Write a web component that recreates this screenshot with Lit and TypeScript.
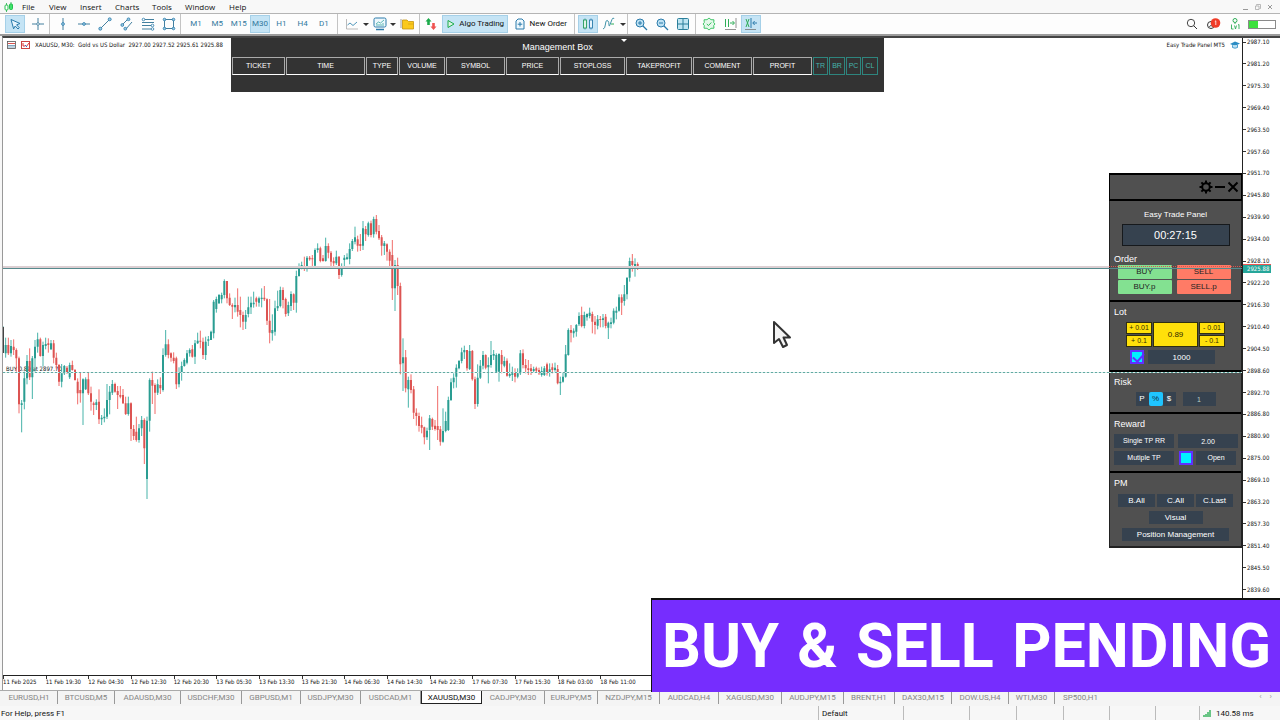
import { LitElement, html, svg, css } from "lit";
import { customElement } from "lit/decorators.js";

/* Candles: wick top, body top, body bottom, wick bottom in thirds of a pixel
   below the session's base; the sign of the last number gives the direction. */
const SESSIONS: { base: number; rows: string }[] = [
  {
    base: 870,
    rows: `110 110 188 188;143 165 190 203;143 165 190 -195;150 168 190 200;148 170 180 -195;175 180 205 -245;200 205 343 -370;330 340 345 427;245 265 335 358;195 213 265 283;175 213 262 -270;198 205 262 327;150 170 205 245;128 148 170 188;143 148 198 -200;155 165 198 230;143 162 168 178;145 160 165 -188;150 160 178 180;150 160 203 -220;188 203 225 -238;222 225 275 -288;222 250 275 292;225 228 250 255;228 233 250 -250;218 225 262 267;212 225 240 -242;237 240 270 -272;265 275 310 -343;247 300 310 -338;265 268 310 405;262 268 298 300;248 268 310 -315;290 310 335 -362;335 340 345 -375;328 337 345 360;298 335 388 -402;375 383 388 405;355 380 385 397;282 330 380 387;288 305 330 373;270 282 308 315;278 282 305 -308;288 303 315 -357;288 315 320 -325;297 315 340 -342;320 340 372 -375;320 340 372 377;337 340 417 -453;405 417 438 -450;380 425 450 -455;402 415 450 458;378 390 415 438;385 390 475 -522;380 392 567 627;265 270 392 425;245 270 287 -342;280 285 308 -372;268 283 308 315;262 285 295 -312;175 195 300 305;120 163 195 200;148 163 195 -205;187 190 203 -215;187 203 213 -220;200 205 283 -297;232 248 283 292;215 228 248 272;205 210 228 230;180 190 218 223;175 180 190 200;165 178 200 -203;150 160 200 222;128 152 160 162;122 152 155 -175;143 155 195 -207;140 155 195 210;138 148 152 168;122 125 150 150;30 35 130 145;20 27 57 68;12 15 40 42`,
  },
  {
    base: 600,
    rows: `278 285 298 310;238 243 285 295;243 243 295 -310;280 293 315 -318;310 315 320 -357;293 315 322 337;265 315 335 -350;290 330 345 -382;335 345 365 -390;330 345 365 387;290 322 342 352;290 308 322 342;275 308 313 323;290 295 305 -320;290 295 308 320;265 293 297 322;258 293 298 -303;295 298 362 -375;297 362 398 -430;343 390 400 422;302 325 395 407;272 318 325 333;260 270 318 322;262 270 300 -325;293 297 342 -350;305 315 340 348;274 282 318 333;280 283 308 -330;212 228 308 338;190 203 228 230;185 195 203 208;170 200 207 -213;168 173 205 215;168 173 178 -182;165 175 178 -200;145 150 197 198;130 145 150 158;140 145 183 -187;165 175 183 -185;113 138 183 185;130 138 158 -175;153 158 185 -203;172 183 190 -202;152 170 190 195;168 170 225 -237;190 203 225 230;165 173 180 205;160 172 177 180;130 147 177 193;117 123 147 153;80 112 125 133;107 118 137 -155;102 132 138 -153;63 85 137 150;78 87 103 -123;65 70 105 110;62 70 105 -112;50 57 103 113;45 57 95 -103;75 93 115 -120;105 112 137 -167;123 130 138 165;130 133 155 -182;148 155 182 -200;120 165 265 -300;180 195 265 333;173 195 258 -285;248 258 493 -523;415 472 490 573;450 472 565 -577;530 540 568 623;523 540 570 -580;558 568 638 -657;625 638 648 -677;638 648 678 -695;650 675 683 -700;680 682 712 -733;683 692 712 720`,
  },
  {
    base: 720,
    rows: `525 535 570 630;533 537 560 -570;540 557 567 -572;438 558 570 -600;558 568 605 -617;505 573 605 608;515 543 573 577;470 480 570 573;415 427 480 483;400 413 427 445;373 383 410 443;360 363 385 388;323 337 363 370;317 330 337 357;330 330 385 -392;315 333 387 390;330 333 418 -422;410 418 492 -507;373 413 492 500;360 377 413 417;333 345 377 388;343 345 383 -388;352 375 382 430;303 345 375 383;330 342 347 360;340 345 395 398;340 342 395 425;330 345 373 -400;350 363 377 382;355 362 407 -410;370 402 408 413;380 400 405 423;385 397 410 -427;385 400 410 415;330 340 400 405;328 340 375 -385;357 375 385 -400;360 385 390 -405;372 385 393 -405;380 387 393 397;380 385 392 -397;383 390 400 -405;380 393 405 410;378 385 405 408;368 373 400 -407;370 388 397 410;370 382 390 -400;368 383 390 395;375 387 430 -433;410 425 430 465;397 410 425 428;315 343 410 413;265 270 345 347;255 270 278 -307;265 272 280 293;252 255 275 290;217 228 253 258;200 225 258 -262;215 225 258 265;220 222 232 242;203 218 228 235;215 222 245 -280;228 245 255 -283;225 238 257 268;228 237 240 -262;222 235 240 262;222 230 258 -265;245 248 263 297;233 247 252 265;205 212 248 253;200 212 218 238;163 172 212 215;163 172 188 -225;135 163 183 197;112 113 163 178;53 63 113 125;42 63 75 -95;55 72 82 110;67 72 85 -90`,
  },
];

function candlePaths() {
  const out = { upWick: "", upBody: "", downWick: "", downBody: "" };
  let i = 0;
  for (const session of SESSIONS) {
    for (const row of session.rows.split(";")) {
      const [top, open, close, low] = row.split(" ").map(Number);
      const y = (v: number) => (v + session.base) / 3 - 38;
      const x = (9 + 8 * i) / 3 - 3;
      const wick = `M${x.toFixed(2)} ${y(top).toFixed(2)}V${y(Math.abs(low)).toFixed(2)}`;
      const body = `M${x.toFixed(2)} ${y(open).toFixed(2)}V${y(Math.max(close, open + 2)).toFixed(2)}`;
      if (low < 0) {
        out.downWick += wick;
        out.downBody += body;
      } else {
        out.upWick += wick;
        out.upBody += body;
      }
      i++;
    }
  }
  return out;
}

const MENUS = ["File", "View", "Insert", "Charts", "Tools", "Window", "Help"];
const FRAMES = ["M1", "M5", "M15", "M30", "H1", "H4", "D1"];
const TIMES = ["11 Feb 2025", "11 Feb 19:30", "12 Feb 04:30", "12 Feb 12:30", "12 Feb 20:30", "13 Feb 05:30", "13 Feb 13:30", "13 Feb 21:30", "14 Feb 06:30", "14 Feb 14:30", "14 Feb 22:30", "17 Feb 07:30", "17 Feb 15:30", "18 Feb 03:00", "18 Feb 11:00"];
const PRICES = Array.from({ length: 26 }, (_, i) => (2987.1 - i * 5.9).toFixed(2));
const TABS = ["EURUSD,H1", "BTCUSD,M5", "ADAUSD,M30", "USDCHF,M30", "GBPUSD,M1", "USDJPY,M30", "USDCAD,M1", "XAUUSD,M30", "CADJPY,M30", "EURJPY,M5", "NZDJPY,M15", "AUDCAD,H4", "XAGUSD,M30", "AUDJPY,M15", "BRENT,H1", "DAX30,M15", "DOW.US,H4", "WTI,M30", "SP500,H1"];
const COLUMNS: [string, number][] = [["TICKET", 53], ["TIME", 79], ["TYPE", 32], ["VOLUME", 46], ["SYMBOL", 59], ["PRICE", 53], ["STOPLOSS", 65], ["TAKEPROFIT", 66], ["COMMENT", 59], ["PROFIT", 59], ["TR", 15], ["BR", 16], ["PC", 15], ["CL", 16]];

const icon = (body: unknown, w = 14, h = 14) =>
  html`<svg class="icon" width=${w} height=${h} viewBox="0 0 ${w} ${h}" aria-hidden="true">${body}</svg>`;

const ICONS = {
  pointer: svg`<path d="M3 2.5 12 6.5 8.6 7.8 11.3 10.8 10 12 7.2 9 5.6 11.8Z" fill="#e8f5fd" stroke="#2b7bab"/>`,
  cross: svg`<path d="M7 1V13M1 7H13" stroke="#44809f"/><circle cx="7" cy="7" r="1.3" fill="#fff" stroke="#44809f" stroke-width=".8"/>`,
  vline: svg`<path d="M7 1V13" stroke="#44809f"/><circle cx="7" cy="7" r="1.4" fill="#9ccbe4" stroke="#2b7bab" stroke-width=".8"/>`,
  hline: svg`<path d="M1 7H13" stroke="#44809f"/><circle cx="7" cy="7" r="1.4" fill="#9ccbe4" stroke="#2b7bab" stroke-width=".8"/>`,
  trend: svg`<path d="M2 12 12 2" stroke="#44809f"/><circle cx="2.3" cy="11.7" r="1.5" fill="#9ccbe4" stroke="#2b7bab" stroke-width=".8"/><circle cx="11.7" cy="2.3" r="1.5" fill="#9ccbe4" stroke="#2b7bab" stroke-width=".8"/>`,
  channel: svg`<path d="M2 8 8 2M6 12 12 5" stroke="#44809f"/><circle cx="2.3" cy="8" r="1.4" fill="#9ccbe4" stroke="#2b7bab" stroke-width=".8"/><circle cx="8.5" cy="2.3" r="1.4" fill="#9ccbe4" stroke="#2b7bab" stroke-width=".8"/><circle cx="5.3" cy="11.7" r="1.4" fill="#9ccbe4" stroke="#2b7bab" stroke-width=".8"/>`,
  fibo: svg`<path d="M1 2.5H13M1 5.5H13M1 8.5H13M1 12H10" stroke="#44809f"/><circle cx="2.5" cy="2.5" r="1.3" fill="#fff" stroke="#2b7bab" stroke-width=".8"/><circle cx="11.5" cy="8.5" r="1.3" fill="#fff" stroke="#2b7bab" stroke-width=".8"/><circle cx="11.5" cy="12" r="1.3" fill="#fff" stroke="#2b7bab" stroke-width=".8"/>`,
  shape: svg`<path d="M2.5 2.5H11.5V11.5H2.5Z" fill="none" stroke="#44809f"/><g fill="#9ccbe4" stroke="#2b7bab" stroke-width=".8"><circle cx="2.5" cy="2.5" r="1.3"/><circle cx="11.5" cy="2.5" r="1.3"/><circle cx="2.5" cy="11.5" r="1.3"/><circle cx="11.5" cy="11.5" r="1.3"/></g>`,
  line: svg`<path d="M1.5 2V12H13" fill="none" stroke="#aaa" stroke-width=".8"/><path d="M2.500 8 5 6 8 8.500 12 5" fill="none" stroke="#4f97bb"/>`,
  template: svg`<rect x="1" y="1" width="12" height="9" rx="1.5" fill="#eef8fd" stroke="#2b7bab"/><path d="M3 7 5.5 5 7.5 6 11 3M4 9V7M6 9V7M8 9V7M10 9V6" fill="none" stroke="#39a6a0" stroke-width=".8"/><path d="M3 12.5H11" stroke="#2b7bab" stroke-width="1.5"/>`,
  folder: svg`<path d="M1 2V11" stroke="#888" stroke-width=".8"/><path d="M2.5 3H7L8.500 4.500H13.500V12H2.500Z" fill="#fbc91c" stroke="#c79610" stroke-width=".8"/><path d="M8 7H13.500" stroke="#d9a414" stroke-width=".8"/>`,
  updown: svg`<path d="M4.500 1 7.500 4.500H5.800V8H3.200V4.500H1.500Z" fill="#1cab4b"/><path d="M9.500 13 12.500 9.500H10.800V6H8.200V9.500H6.500Z" fill="#ef5350"/>`,
  play: svg`<path d="M2 1.500 8 5 2 8.500Z" fill="#dcf5e4" stroke="#1cab4b"/>`,
  order: svg`<path d="M3 1H7L9 3V11H1V3Z" fill="#eef8fd" stroke="#2b7bab"/><path d="M5 4V8.500M2.700 6.200H7.300" stroke="#2b7bab"/>`,
  candles: svg`<path d="M4 1.500V12.500M10 1.500V12.500" stroke="#2b7bab" stroke-width=".8"/><rect x="2.500" y="3" width="3" height="8" fill="#dff3e8" stroke="#259b5d" stroke-width=".9"/><rect x="8.500" y="3" width="3" height="8" fill="#e8f5fd" stroke="#2b7bab" stroke-width=".9"/>`,
  indicator: svg`<path d="M1 12Q3 12 3.500 7T6 4Q7 5 7 8T9 5T12 2" fill="none" stroke="#4093a8"/><path d="M9 7H12" stroke="#2fae58"/>`,
  zoomIn: svg`<circle cx="6" cy="6" r="4" fill="#bde1f3" stroke="#2b7bab"/><path d="M9 9 13 13" stroke="#2b7bab" stroke-width="1.300"/><path d="M4 6H8M6 4V8" stroke="#2b7bab"/>`,
  zoomOut: svg`<circle cx="6" cy="6" r="4" fill="#bde1f3" stroke="#2b7bab"/><path d="M9 9 13 13" stroke="#2b7bab" stroke-width="1.300"/><path d="M4 6H8" stroke="#2b7bab"/>`,
  grid: svg`<rect x="1.500" y="1.500" width="11" height="11" rx="1" fill="#bfe5f2" stroke="#2b7f9b"/><path d="M7 1.500V12.500M1.500 7H12.500" stroke="#2b7f9b"/>`,
  gear: svg`<path d="M7 1 9 2.700 12 2.800 11.700 5.500 13 7 11.700 8.500 12 11.200 9 11.300 7 13 5 11.300 2 11.200 2.300 8.500 1 7 2.300 5.500 2 2.800 5 2.700Z" fill="#e4f8ea" stroke="#2fbf5a" stroke-width=".9"/><path d="M4.800 7 6.500 8.500 9.300 5.500" fill="none" stroke="#2fbf5a"/>`,
  scroll: svg`<path d="M2.500 2V10M5.500 2V10M7 6H11M9.500 4 11.500 6 9.500 8" fill="none" stroke="#2fae58"/><path d="M13 1V11M2 12.500H13" stroke="#777" stroke-width=".8"/>`,
  shift: svg`<path d="M2 2 5 10M5 2 2 10" stroke="#2fae58"/><path d="M7 1V11M9 6H13M10.700 4 8.700 6 10.700 8" fill="none" stroke="#2b7bab"/><path d="M1 12.500H12" stroke="#777" stroke-width=".8"/>`,
  search: svg`<circle cx="6" cy="6" r="3.700" fill="none" stroke="#333" stroke-width=".9"/><path d="M8.700 8.700 12 12" stroke="#333"/>`,
};

@customElement("app-root")
export class AppRoot extends LitElement {
  static styles = css`
    :host { display: flex; flex-direction: column; min-height: 100vh; position: relative; overflow: hidden; background: #f7f7f7; color: #111; font: 8px/12px Roboto, "Open Sans", sans-serif; }
    * { box-sizing: border-box; }
    button, input { font: inherit; color: inherit; margin: 0; padding: 0; border: 0; border-radius: 0; background: none; white-space: nowrap; }
    .icon { display: block; flex: none; }

    .menubar { display: flex; align-items: center; height: 13px; padding: 0 6px 0 4px; background: #f8f8f8; font-family: "Open Sans", "Noto Sans", sans-serif; }
    .menubar nav { display: grid; grid-template-columns: 27px 31px 35px 37px 33px 44px 24px; margin-left: 8px; }
    .menubar button { text-align: left; }
    .window-buttons { display: flex; gap: 4px; margin-left: auto; }

    .toolbar { display: grid; grid-template-columns: 49px 131px 157px 82px 155px 53px 68px 68px 1fr; height: 23px; background: #fdfdfd; border-top: 1px solid #b4b4b4; border-bottom: 2px solid #9c9c9c; }
    .group { display: flex; align-items: center; justify-content: space-between; padding: 0 1px 0 3px; border-left: 1px solid #c4c4c4; }
    .group.first { border-left: 0; padding-left: 5px; }
    .group.frames { padding: 0 3px 0 5px; }
    .group.tools { padding: 0 4px 0 6px; }
    .group.trade { padding: 0 3px; }
    .group.zooms, .group.scrolls { padding-right: 2px; }
    .group.right { border: 0; justify-content: flex-end; gap: 7px; padding-right: 4px; }
    .tool { display: flex; align-items: center; justify-content: center; width: 20px; height: 18px; color: #33799d; }
    .tool.narrow { width: 16px; }
    .tool.wide { width: auto; gap: 4px; padding: 0 4px; color: #111; }
    .on { background: #c5e4f5; outline: 1px solid #a5d0e8; outline-offset: -1px; }
    .caret { width: 0; border: 3px solid transparent; border-top-color: #333; border-bottom: 0; }
    .battery { display: block; width: 28px; height: 9px; border: 1px solid #8a8a8a; background: linear-gradient(90deg, #3de03d 9px, #fff 9px); }

    .frame { flex: 1; display: grid; grid-template: 1fr 15px / 1fr 37px; margin-left: 2px; border-top: 2px solid #444; border-left: 1px solid #999; background: #fff; position: relative; font-family: "DejaVu Sans Condensed", "DejaVu Sans", sans-serif; font-size: 6px; line-height: 8px; }
    .plot { position: relative; border-right: 1px solid #222; border-bottom: 1px solid #222; }
    .chart { display: block; position: absolute; left: 0; top: 0; }
    .chart-head { position: relative; display: flex; align-items: center; justify-content: space-between; padding: 3px 2px 0 4px; height: 11px; }
    .chart-head div { display: flex; align-items: center; gap: 5px; white-space: pre; }
    .prices { display: flex; flex-direction: column; justify-content: space-between; padding-bottom: 82px; position: relative; }
    .prices span { display: flex; align-items: center; gap: 1px; height: 8px; }
    .prices span::before { content: ""; width: 3px; height: 1px; background: #333; }
    .tag { position: absolute; left: 0; top: 226px; padding: 0 2px 0 4px; background: #26a69a; color: #fff; border-top: 1px solid #ef5350; font-weight: 400; line-height: 8px; }
    .times { grid-column: 1 / 3; display: grid; grid-template-columns: repeat(15, 1fr); width: 640px; }
    .times span { padding-top: 2px; height: 13px; white-space: nowrap; background: linear-gradient(#333, #333) 0 0 / 1px 3px no-repeat; }

    .position { position: absolute; left: 3px; top: 327px; }
    .level { position: absolute; left: 0; right: 0; z-index: 3; height: 0; pointer-events: none; }
    .level.ask { top: 228px; right: 133px; border-top: 2px solid #dccfd2; }
    .level.ask-dots { top: 228px; left: auto; width: 133px; border-top: 1px dotted #d9534f; }
    .level.bid { top: 230px; border-top: 1px solid #568a8d; }
    .level.entry { top: 334px; height: 1px; background: repeating-linear-gradient(90deg, #62aaa2 0 2px, #d5ebe9 2px 4px); }

    .box { position: absolute; left: 228px; top: 0; width: 653px; height: 54px; background: #333; color: #fff; font-family: "Liberation Sans", Arial, sans-serif; text-align: center; }
    .box h2 { margin: 0; padding-top: 3px; height: 19px; font-size: 9px; line-height: 12px; font-weight: 400; }
    .box table { border-spacing: 1px 0; table-layout: fixed; width: 648px; font-size: 7px; line-height: 8px; }
    .box th { height: 18px; padding: 0; font-weight: 400; border: 1px solid #aaa; border-bottom-color: #fff; }
    .box th.action { color: #45b5ab; border-color: #2e857e; }
    .marker { position: absolute; left: 390px; top: 1px; border: 3px solid transparent; border-top-color: #fff; border-bottom: 0; }

    .panel { position: absolute; right: 0; top: 135px; width: 133px; border: 1px solid #222; border-width: 0 1px 2px; background: #505050; color: #fff; font: 8px/10px "Liberation Sans", Arial, sans-serif; }
    .panel header { display: flex; justify-content: flex-end; align-items: center; gap: 1px; height: 28px; padding-right: 2px; border: 2px solid #000; border-width: 2px 1px; margin: 0 -1px; }
    .panel h2, .panel h3 { margin: 0; font-size: 8px; line-height: 10px; font-weight: 400; }
    .panel h3 { font-size: 9px; padding-left: 4px; }
    .panel section { border-bottom: 2px solid #000; padding-top: 5px; }
    .panel .title { text-align: center; padding-top: 4px; }
    .panel .clock { display: block; margin: 4px auto 8px; width: 108px; height: 22px; border: 1px solid #16191c; background: #36424f; font-size: 11px; line-height: 20px; text-align: center; }
    .orders { display: grid; grid-template-columns: 54px 54px; gap: 1px 5px; justify-content: center; padding: 1px 3px 0 0; color: #222; }
    .orders button { height: 14px; border-radius: 1px; background: #83e191; }
    .orders .sell { background: #ff7b66; }
    .panel .order { height: 101px; }
    .panel .lot { height: 70px; }
    .panel .risk { height: 42px; }
    .panel .reward { height: 59px; }
    .lots { display: grid; grid-template: 12px 12px / 26px 45px 26px; grid-auto-flow: column; gap: 1px; justify-content: center; padding: 5px 0 0; color: #332b00; }
    .lots > * { background: #ffe00a; font-size: 7px; line-height: 10px; text-align: center; width: 100%; height: 100%; border: 1px solid #302f10; }
    .lots input { grid-row: span 2; font-size: 8px; }
    .row { display: flex; justify-content: center; gap: 4px; padding-top: 3px; }
    .row > button, .row > .field { height: 14px; background: #36424f; text-align: center; }
    .row.tight { gap: 0; }
    .field { width: 67px; }
    .check { appearance: none; width: 14px; height: 14px; border: 2px solid #6030ff; background: #00f0ff; position: relative; }
    .check.tick:checked::after { content: ""; position: absolute; left: 3px; top: -1px; width: 5px; height: 9px; border: solid #6030ff; border-width: 0 2px 2px 0; transform: rotate(42deg); }
    .lot .row { padding-right: 6px; }
    .risk .row { padding: 5px 0 0; }
    .risk .row > button { width: 13px; }
    .risk .row > .current { width: 14px; background: #1fc4ff; color: #103040; border-radius: 2px; }
    .risk .field { width: 33px; margin-left: 7px; color: #b9d2c6; font-size: 7px; }
    .reward .row { font-size: 7px; justify-content: flex-start; padding: 3px 0 0 4px; }
    .reward h3 + .row { padding-top: 5px; }
    .reward .row > button, .reward .field { width: 60px; }
    .reward .row > .check { margin-left: 1px; }
    .reward .row > .open { width: 40px; margin-left: -1px; }
    .panel .pm { border: 0; height: 73px; }
    .pm .row { padding-top: 4px; }
    .pm h3 + .row { padding-top: 6px; }
    .pm .row > button { width: 37px; height: 13px; }
    .pm .row:nth-of-type(1) { gap: 2px; }
    .pm .row > .visual { width: 54px; }
    .pm .row > .manage { width: 107px; }

    .tabs { display: grid; grid-template-columns: 57px 57px 66px 61px 59px 60px 60px 61px 63px 53px 62px 59px 63px 62px 51px 57px 57px 46px 51px 1fr; height: 16px; padding: 0 8px 2px 1px; margin-top: -1px; background: #f4f4f4; border-top: 1px solid #aaa; position: relative; }
    .tabs button { height: 13px; line-height: 11px; color: #858585; border-right: 1px solid #999; }
    .tabs button.last { border: 0; }
    .tabs button.active { background: #fff; color: #111; border: 1px solid #222; border-top: 0; }
    .arrows { text-align: right; color: #999; white-space: pre; }
    .status { display: grid; grid-template-columns: 818px 85px 66px 47px 47px 46px 46px 44px 1fr; height: 14px; line-height: 13px; background: #f7f7f7; white-space: nowrap; }
    .status span { padding-left: 3px; border-left: 1px solid #bbb; display: flex; align-items: center; gap: 5px; }
    .status span.help { border: 0; padding-left: 1px; }

    .banner { position: absolute; right: 0; bottom: 28px; z-index: 5; display: flex; align-items: center; justify-content: space-between; width: 629px; height: 94px; margin: 0; padding: 0 9px 0 10px; border: 2px solid #111; border-width: 2px 0 0 1px; background: #762dfe; color: #fff; font: 700 61px/92px Roboto, "Open Sans", sans-serif; }
    .mouse { position: absolute; left: 772px; top: 320px; z-index: 6; }
  `;

  private tool(body: unknown, label: string, on = false) {
    return html`<button class="tool ${on ? "on" : ""}" aria-label=${label}>${icon(body)}</button>`;
  }

  render() {
    const c = candlePaths();
    return html`
      <div class="menubar">
        ${icon(svg`<path d="M2.500 1V10M7 0V8" stroke="#25a84d" stroke-width=".8"/><rect x="1" y="3" width="3" height="5" rx="1" fill="#fff" stroke="#25c04d"/><rect x="5.500" y="2" width="3" height="5.500" rx="1" fill="#3fe36b" stroke="#25c04d"/>`, 10, 10)}
        <nav>${MENUS.map((m) => html`<button>${m}</button>`)}</nav>
        <div class="window-buttons">
          ${icon(svg`<path d="M1 6.500H6" stroke="#999"/>`, 8, 8)}
          ${icon(svg`<path d="M2.500 2.500V1.500H6.500V5.500H5.500M1.500 3H5V6.500H1.500Z" fill="none" stroke="#aaa" stroke-width=".8"/>`, 8, 8)}
          ${icon(svg`<path d="M2 2 6 6M6 2 2 6" stroke="#999"/>`, 8, 8)}
        </div>
      </div>

      <div class="toolbar">
        <div class="group first">${this.tool(ICONS.pointer, "Cursor", true)}${this.tool(ICONS.cross, "Crosshair")}</div>
        <div class="group">
          ${this.tool(ICONS.vline, "Vertical line")}${this.tool(ICONS.hline, "Horizontal line")}${this.tool(ICONS.trend, "Trend line")}${this.tool(ICONS.channel, "Channel")}${this.tool(ICONS.fibo, "Fibonacci")}${this.tool(ICONS.shape, "Shapes")}
        </div>
        <div class="group frames">${FRAMES.map((f) => html`<button class="tool ${f === "M30" ? "on" : ""}">${f}</button>`)}</div>
        <div class="group tools">
          <button class="tool narrow" aria-label="Chart type">${icon(ICONS.line)}</button><i class="caret"></i>
          <button class="tool narrow" aria-label="Templates">${icon(ICONS.template)}</button><i class="caret"></i>
          <button class="tool narrow" aria-label="Profiles">${icon(ICONS.folder)}</button>
        </div>
        <div class="group trade">
          <button class="tool narrow" aria-label="Trades">${icon(ICONS.updown)}</button>
          <button class="tool wide on">${icon(ICONS.play, 9, 10)}Algo Trading</button>
          <button class="tool wide">${icon(ICONS.order, 10, 12)}New Order</button>
        </div>
        <div class="group">
          ${this.tool(ICONS.candles, "Candles", true)}<button class="tool narrow" aria-label="Indicators">${icon(ICONS.indicator)}</button><i class="caret"></i>
        </div>
        <div class="group zooms">${this.tool(ICONS.zoomIn, "Zoom in")}${this.tool(ICONS.zoomOut, "Zoom out")}${this.tool(ICONS.grid, "Tile windows")}</div>
        <div class="group scrolls">${this.tool(ICONS.gear, "Settings")}${this.tool(ICONS.scroll, "Auto scroll")}${this.tool(ICONS.shift, "Chart shift", true)}</div>
        <div class="group right">
          ${icon(ICONS.search)}
          ${icon(svg`<circle cx="5" cy="8" r="3.500" fill="none" stroke="#333"/><path d="M3.500 10C4 8 6 8 6.500 10" stroke="#333" fill="none"/><circle cx="9.500" cy="6" r="4.800" fill="#f03c28"/><path d="M8.800 4.600 9.800 3.800V8" fill="none" stroke="#fff" stroke-width=".8"/>`, 16, 14)}
          ${icon(svg`<circle cx="6" cy="3.500" r="2" fill="none" stroke="#2fae58"/><path d="M6 5.500V7M2.500 7.500V12H4.500M5.500 8.500 6.500 12 7.500 8.500M9 8 10 7.500V12" fill="none" stroke="#2fae58" stroke-width=".9"/>`, 12, 14)}
          <i class="battery"></i>
        </div>
      </div>

      <main class="frame">
        <div class="plot">
          <span class="position">BUY 0.89 at 2897.70</span>
          <svg class="chart" width="640" height="500" fill="none" aria-label="XAUUSD M30 candles">
            <path d=${c.upWick} stroke="#26a69a" stroke-opacity=".85"/>
            <path d=${c.downWick} stroke="#ef5350" stroke-opacity=".85"/>
            <path d=${c.upBody} stroke="#2a9d92" stroke-width="2"/>
            <path d=${c.downBody} stroke="#dc5452" stroke-width="2"/>
            <path d="M.5 289V315" stroke="#444"/>
          </svg>
          <div class="chart-head">
            <div>
              ${icon(svg`<rect x=".500" y=".500" width="8" height="7" fill="#fff" stroke="#555" stroke-width=".8"/><path d="M1 2.500H8" stroke="#d9534f"/><path d="M1 4.500H8M1 6H8" stroke="#4a7fa5" stroke-width=".7"/>`, 9, 8)}
              ${icon(svg`<rect x=".500" y=".500" width="8" height="7" fill="#fff" stroke="#c44"/><path d="M2 2V5H4M5 6 8 2" fill="none" stroke="#d33"/><path d="M4 4 6 6" stroke="#36c"/>`, 9, 8)}
              <span>XAUUSD, M30:  Gold vs US Dollar  2927.00 2927.52 2925.61 2925.88</span>
            </div>
            <div>
              <span>Easy Trade Panel MT5</span>
              ${icon(svg`<path d="M0 3 5 .500 10 2.500 5 5Z" fill="#2b8cc4"/><path d="M2.500 4.200V6.500Q5 8 7.500 6.500V4" fill="#bde1f3" stroke="#2b8cc4" stroke-width=".8"/>`, 10, 8)}
            </div>
          </div>

          <div class="box">
            <h2>Management Box</h2>
            <table>
              <thead><tr>${COLUMNS.map(([name, w]) => html`<th scope="col" class=${name.length === 2 ? "action" : ""} style="width:${w}px">${name}</th>`)}</tr></thead>
            </table>
            <i class="marker"></i>
          </div>

          <aside class="panel">
            <header>
              <button aria-label="Settings">${icon(svg`<circle cx="7" cy="7" r="3.800" fill="none" stroke="#000" stroke-width="2"/><path d="M7 .500V3M7 11V13.500M.500 7H3M11 7H13.500M2.400 2.400 4 4M10 10 11.600 11.600M2.400 11.600 4 10M10 4 11.600 2.400" stroke="#000" stroke-width="2"/>`)}</button>
              <button aria-label="Minimise">${icon(svg`<path d="M1 7H11" stroke="#000" stroke-width="2"/>`, 12, 14)}</button>
              <button aria-label="Close">${icon(svg`<path d="M1.500 2.500 10.500 11.500M10.500 2.500 1.500 11.500" stroke="#000" stroke-width="2"/>`, 12, 14)}</button>
            </header>
            <section class="order">
              <h2 class="title">Easy Trade Panel</h2>
              <time class="clock">00:27:15</time>
              <h3>Order</h3>
              <div class="orders"><button>BUY</button><button class="sell">SELL</button><button>BUY.p</button><button class="sell">SELL.p</button></div>
            </section>
            <section class="lot">
              <h3>Lot</h3>
              <div class="lots"><button>+ 0.01</button><button>+ 0.1</button><input aria-label="Lot size" value="0.89" /><button>- 0.01</button><button>- 0.1</button></div>
              <div class="row"><input class="check tick" type="checkbox" checked aria-label="Use balance" /><input class="field" aria-label="Balance" value="1000" /></div>
            </section>
            <section class="risk">
              <h3>Risk</h3>
              <div class="row tight"><button>P</button><button class="current">%</button><button>$</button><input class="field" aria-label="Risk value" value="1" /></div>
            </section>
            <section class="reward">
              <h3>Reward</h3>
              <div class="row"><button>Single TP RR</button><input class="field" aria-label="Risk reward ratio" value="2.00" /></div>
              <div class="row"><button>Mutiple TP</button><input class="check" type="checkbox" aria-label="Multiple targets" /><button class="open">Open</button></div>
            </section>
            <section class="pm">
              <h3>PM</h3>
              <div class="row"><button>B.All</button><button>C.All</button><button>C.Last</button></div>
              <div class="row"><button class="visual">Visual</button></div>
              <div class="row"><button class="manage">Position Management</button></div>
            </section>
          </aside>

          <i class="level ask"></i><i class="level ask-dots"></i><i class="level bid"></i><i class="level entry"></i>
        </div>
        <div class="prices">${PRICES.map((p) => html`<span>${p}</span>`)}<b class="tag">2925.88</b></div>
        <div class="times">${TIMES.map((t) => html`<span>${t}</span>`)}</div>
      </main>

      <div class="tabs">
        ${TABS.map((t, i) => html`<button class="${t === "XAUUSD,M30" ? "active" : ""} ${i === TABS.length - 1 ? "last" : ""}">${t}</button>`)}
        <span class="arrows">‹    ›</span>
      </div>
      <footer class="status">
        <span class="help">For Help, press F1</span><span>Default</span><span></span><span></span><span></span><span></span><span></span><span></span>
        <span>${icon(svg`<path d="M1 8V6M3 8V5M5 8V3M7 8V1" stroke="#3bb560" stroke-width="1.500"/>`, 8, 9)}140.58 ms</span>
      </footer>

      <h1 class="banner"><span>BUY</span><span>&amp;</span><span>SELL</span><span>PENDING</span></h1>
      <svg class="mouse" width="20" height="30" viewBox="0 0 20 30" aria-hidden="true">
        <path d="M2 2V23L7 19 11 27 15 25 11.500 17.500H18Z" fill="#f4f4f4" stroke="#333" stroke-width="2" stroke-linejoin="round"/>
      </svg>
    `;
  }
}
